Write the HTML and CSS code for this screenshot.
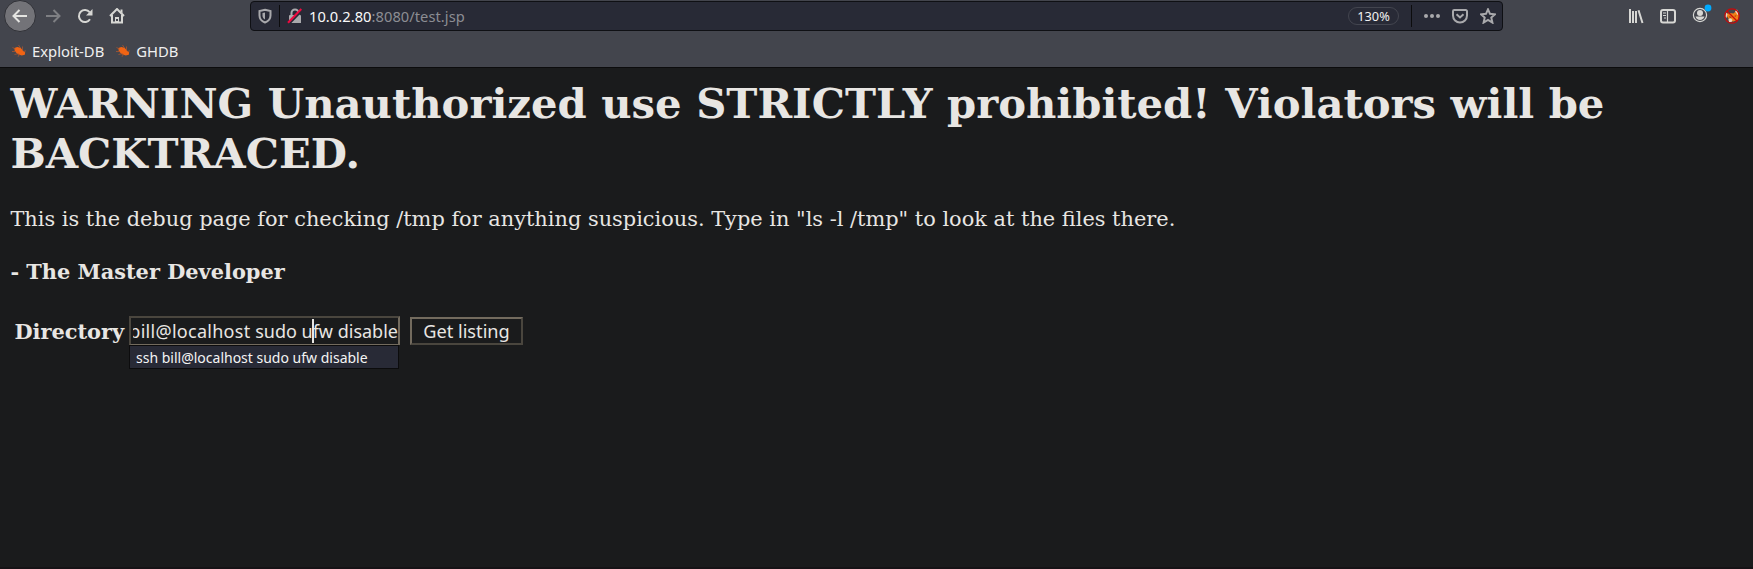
FILE: index.html
```html
<!DOCTYPE html>
<html lang="en">
<head>
<meta charset="utf-8">
<title>test.jsp</title>
<link rel="stylesheet" href="styles.css">
</head>
<body>
<header class="chrome">
  <div class="toolbar">
    <nav class="nav">
      <span class="back"><svg width="16" height="16" viewBox="0 0 16 16"><path d="M15 8H1.500M7.500 2L1.500 8l6 6"/></svg></span>
      <svg class="forward" width="16" height="16" viewBox="0 0 16 16"><path d="M1 8h13.500M8.500 2l6 6-6 6"/></svg>
      <svg class="reload" width="16" height="16" viewBox="0 0 16 16"><path d="M13 11.200A6 6 0 1 1 12.600 4.200"/><path class="fill" d="M15.500 1v6.500H9z"/></svg>
      <svg class="home" width="16" height="16" viewBox="0 0 16 16"><path d="M1 8l7-7 7 7M3 7v7.500h10V7"/><path class="fill" d="M6 9h4v6H6zM11.500 1.500h2v4l-2-2z"/><path class="door" d="M8 11v2"/></svg>
    </nav>
    <div class="urlbar">
      <svg class="shield" width="14" height="16" viewBox="0 0 14 16"><path d="M7 1.800L12.500 3v4.500c0 3.300-2 5.700-5.500 7-3.500-1.300-5.500-3.700-5.500-7V3z"/><path class="fill" d="M7 4.500v7c-1.800-.8-2.500-2.300-2.500-4V5z"/></svg>
      <i class="rule"></i>
      <svg class="lock" width="16" height="16" viewBox="0 0 16 16"><path d="M4.500 8V5a3.500 3.500 0 0 1 7 0v3"/><path class="fill" d="M3 7h10a1 1 0 0 1 1 1v7H2V8a1 1 0 0 1 1-1z"/><path class="gap" d="M2 16L15.500 2"/><path class="slash" d="M1 14.800L14.300 1"/></svg>
      <span class="url"><b>10.0.2.80</b>:8080/test.jsp</span>
      <span class="zoom">130%</span>
      <i class="rule"></i>
      <svg class="dots" width="18" height="16" viewBox="0 0 18 16"><circle cx="3" cy="8" r="2"/><circle cx="9" cy="8" r="2"/><circle cx="15" cy="8" r="2"/></svg>
      <svg class="pocket" width="16" height="16" viewBox="0 0 16 16"><path d="M2.200 2h11.600a1.200 1.200 0 0 1 1.200 1.200V7.500a7 7 0 0 1-14 0V3.200A1.200 1.200 0 0 1 2.200 2z"/><path d="M4.500 6.300L8 9.500l3.500-3.200"/></svg>
      <svg class="star" width="16" height="16" viewBox="0 0 16 16"><path d="M8 1.300l2 4.500 5 .5-3.700 3.300 1.100 5L8 12l-4.400 2.600 1.100-5L1 6.300l5-.5z"/></svg>
    </div>
    <div class="tools">
      <svg width="16" height="16" viewBox="0 0 16 16"><path d="M2 1v14M5 3v12M8 3v12M10.500 2.200L14.500 15"/></svg>
      <svg width="16" height="16" viewBox="0 0 16 16"><rect x="1" y="2" width="14" height="12.500" rx="2"/><path class="thin" d="M7.500 2v12.500M3 5h3M3 7.500h3M4 10h2"/></svg>
      <svg class="account" width="20" height="22" viewBox="0 0 20 22"><circle class="thin" cx="8" cy="13" r="6.600"/><circle class="fill" cx="8" cy="11" r="3"/><path class="fill" d="M3.500 14.500h9c-.7 2.100-2.300 3.400-4.500 3.400s-3.800-1.300-4.500-3.400z"/><circle class="badge" cx="16" cy="6" r="3.400"/></svg>
      <svg class="fox" width="16" height="16" viewBox="0 0 16 16"><path class="orange" d="M1.500 6l4-1 4 .5 3-3 2.500 4-.5 5-5 2H5l-.5-3z"/><path class="white" d="M1.500 4l2 2-1 4-1-1zM11 3l2-1.500L15 6l-1.500 1zM4.500 11l2-1 2 2-1 2H5z"/><path class="ember" d="M5 8l3 1-2 1.500zM10 8l2.500-1-1 2z"/><path class="ban" d="M3 3l10 10"/><circle class="ban" cx="8" cy="8" r="7.200"/></svg>
    </div>
  </div>
  <div class="bookmarks">
    <span class="bookmark"><svg width="15" height="14" viewBox="0 0 15 14"><path class="bug" d="M2.300 4l3-1 3.200.7L11 6.500l2.200 2-.4 2.300-3 .7-4-1.300-3-3z"/><path class="legs" d="M0 7.500h4M2.500 10.500l4-1M6 12.800l1.500-2.500M6.500 1l2 3M10.500 2.500v4M.5 3.500l3 1.500M11.500 7.500l2.500-.7"/></svg>Exploit-DB</span>
    <span class="bookmark"><svg width="15" height="14" viewBox="0 0 15 14"><path class="bug" d="M2.300 4l3-1 3.200.7L11 6.500l2.200 2-.4 2.300-3 .7-4-1.300-3-3z"/><path class="legs" d="M0 7.500h4M2.500 10.500l4-1M6 12.800l1.500-2.500M6.500 1l2 3M10.500 2.500v4M.5 3.500l3 1.500M11.500 7.500l2.500-.7"/></svg>GHDB</span>
  </div>
</header>
<main class="page">
  <h1 class="warning">WARNING Unauthorized use STRICTLY prohibited! Violators will be BACKTRACED.</h1>
  <p class="intro">This is the debug page for checking /tmp for anything suspicious. Type in "ls -l /tmp" to look at the files there.</p>
  <p class="signature">- The Master Developer</p>
  <div class="form">
    <span class="label">Directory</span>
    <div class="field">
      <div class="input"><div class="viewport"><span class="value"><span class="host">bill@localhost</span> sudo ufw disable</span></div></div>
      <i class="caret"></i>
      <div class="suggestion">ssh bill@localhost sudo ufw disable</div>
    </div>
    <div class="button">Get listing</div>
  </div>
</main>
</body>
</html>
```
FILE: styles.css
```css
* { box-sizing: border-box; }
body { margin: 0; height: 569px; overflow: hidden; display: flex; flex-direction: column; background: #1a1b1c; color: #e8e6e3; font-family: "Noto Sans", sans-serif; }
svg { display: block; flex: none; fill: none; stroke: #d7d7d4; stroke-width: 2; }
svg .fill { fill: #d7d7d4; stroke: none; }
svg .thin { stroke-width: 1.2; }
.chrome { height: 68px; flex: none; background: #43454d; border-bottom: 1px solid #0c0c0d; }
.toolbar { height: 32px; display: flex; align-items: center; }
.nav { width: 250px; flex: none; display: flex; align-items: center; padding-left: 4px; }
.back { width: 32px; height: 32px; border-radius: 50%; background: #737378; border: 1px solid #303137; display: flex; align-items: center; justify-content: center; }
.back svg { stroke: #e4e4e1; }
.forward { margin-left: 9px; stroke: #7e7f83; }
.reload { margin-left: 16px; }
.home { margin-left: 16px; }
.home .door { stroke: #43454d; }
.urlbar { width: 1253px; height: 30px; flex: none; display: flex; align-items: center; background: #282a36; border: 1px solid #0f1014; border-radius: 4px; color: #8c8d93; font-size: 14.67px; }
.urlbar svg { stroke: #a9a9ac; }
.urlbar svg .fill { fill: #a9a9ac; }
.shield { margin-left: 7px; }
.rule { width: 1px; height: 22px; background: #0c0c0d; flex: none; }
.shield + .rule { margin: 0 7px 0 7px; }
.urlbar .lock .gap { stroke: #282a36; }
.urlbar .lock .slash { stroke: #f0093f; }
.url { margin-left: 6px; flex: 1; white-space: nowrap; letter-spacing: 0.05px; }
.url b { font-weight: 400; color: #f9f9fa; }
.zoom { width: 51px; height: 18px; border: 1px solid #43454f; border-radius: 9px; font-size: 12.8px; line-height: 17px; text-align: center; color: #f1f1f1; margin-right: 12px; }
.urlbar .dots { fill: #a9a9ac; stroke: none; margin-left: 11px; }
.zoom + .rule { margin-left: 0; }
.pocket { margin-left: 11px; }
.pocket + .star { margin: 0 6px 0 12px; }
.tools { display: flex; align-items: center; margin-left: 125px; gap: 16px; }
.account { margin: -6px -4px 0 0; }
.account .badge { fill: #00aaff; stroke: none; }
.fox .orange { fill: #f08018; stroke: none; }
.fox .ember { fill: #b84214; stroke: none; }
.fox .white { fill: #e8d8c4; stroke: none; }
.fox .ban { stroke: #cc0808; stroke-width: 1.2; }
.bookmarks { height: 35px; display: flex; align-items: center; gap: 12px; padding: 6px 0 0 12px; font-size: 14.8px; color: #f0f0f0; }
.bookmark { display: flex; align-items: center; gap: 5px; line-height: 20px; height: 20px; margin-top: -3px; white-space: nowrap; }
.bug { fill: #f06414; stroke: none; }
.legs { stroke: #a85530; stroke-width: 0.8; }
.page { flex: 1; padding: 11px 10.4px 0; font-family: "DejaVu Serif", serif; font-size: 20.88px; border-bottom: 2px solid #161316; }
.warning { margin: 0; font-size: 41.75px; line-height: 50px; }
.intro { margin: 28px 0 0; line-height: 25px; }
.signature { margin: 27px 0 0; line-height: 25px; font-weight: 700; }
.form { display: flex; align-items: flex-start; margin-top: 32px; padding-left: 4px; font-family: "Noto Sans", sans-serif; font-size: 18.2px; }
.label { width: 114.6px; font: 700 20.88px/25px "DejaVu Serif", serif; padding-top: 3px; }
.field { position: relative; width: 271px; }
.input { height: 29px; border: 2px solid; border-color: #4a463e #736b5e #736b5e #4a463e; border-bottom-width: 1px; padding-left: 2px; line-height: 26px; }
.viewport { display: flex; justify-content: flex-end; overflow: hidden; white-space: nowrap; }
.value { flex: none; font-size: 18px; }
.host { letter-spacing: 0.28px; }
.caret { position: absolute; left: 183px; top: 3px; width: 2px; height: 24px; background: #e8e6e3; }
.suggestion { position: absolute; left: 0; top: 29px; width: 270px; height: 24px; background: #282a36; border: 1px solid #0c0c0d; padding-left: 6px; font-size: 14px; line-height: 23px; white-space: nowrap; color: #f4f4f4; }
.button { width: 113px; height: 28px; margin: 1px 0 0 10px; border: 2px solid; border-color: #736b5e #4a463e #4a463e #736b5e; text-align: center; line-height: 24px; white-space: nowrap; }
```
